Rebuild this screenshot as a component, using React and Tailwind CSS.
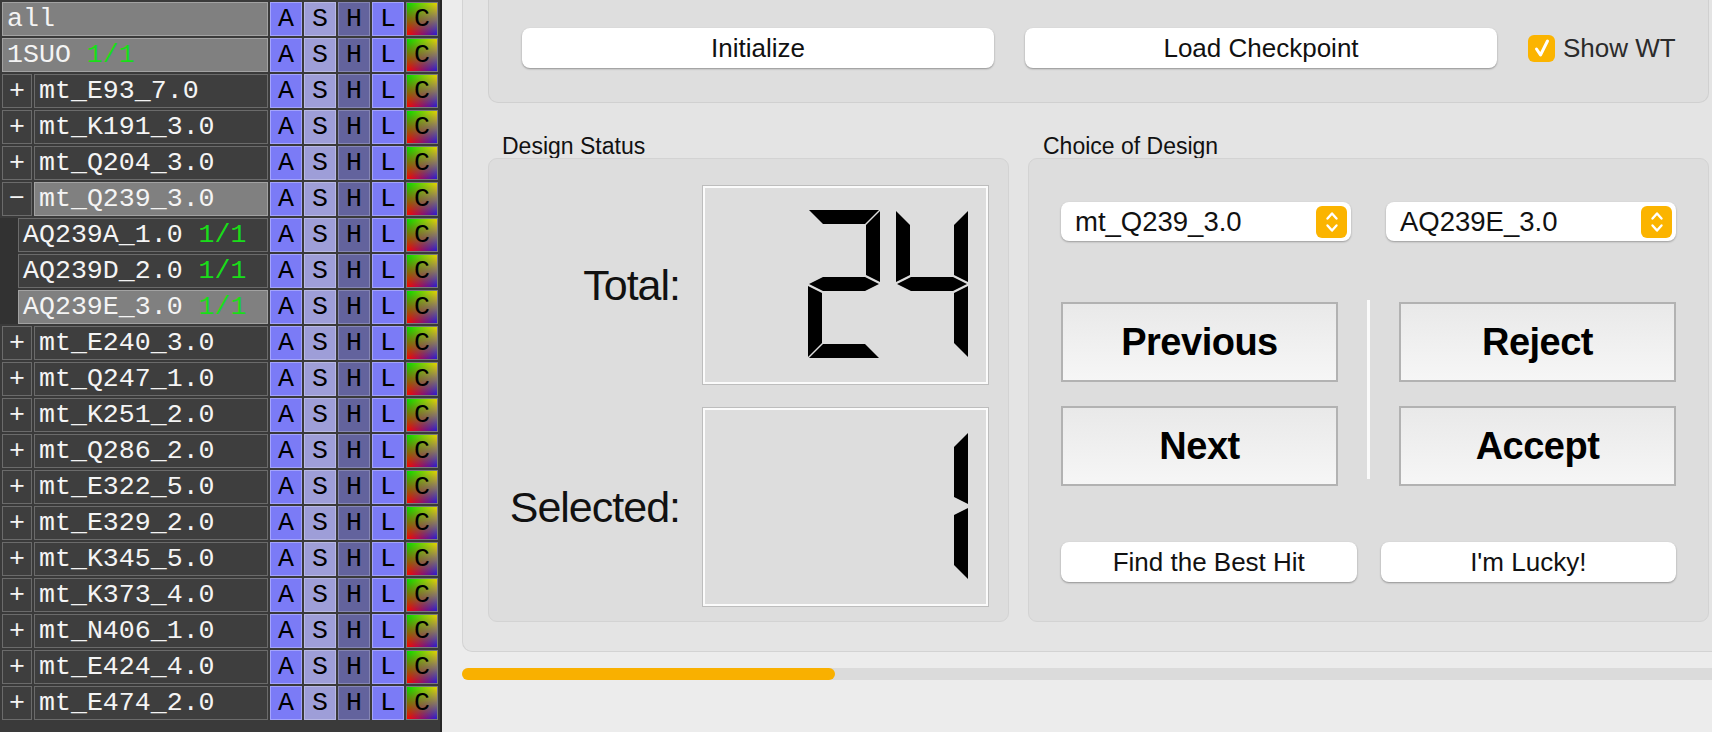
import React from 'react';

const MONO = "font-['Liberation_Mono',monospace]";

const ROWS = [
  { kind: 'top', name: 'all', hl: true },
  { kind: 'top', name: '1SUO', count: '1/1', hl: true },
  { kind: 'mut', sign: '+', name: 'mt_E93_7.0' },
  { kind: 'mut', sign: '+', name: 'mt_K191_3.0' },
  { kind: 'mut', sign: '+', name: 'mt_Q204_3.0' },
  { kind: 'mut', sign: '−', name: 'mt_Q239_3.0', hl: true },
  {
    kind: 'group',
    children: [
      { name: 'AQ239A_1.0', count: '1/1' },
      { name: 'AQ239D_2.0', count: '1/1' },
      { name: 'AQ239E_3.0', count: '1/1', hl: true },
    ],
  },
  { kind: 'mut', sign: '+', name: 'mt_E240_3.0' },
  { kind: 'mut', sign: '+', name: 'mt_Q247_1.0' },
  { kind: 'mut', sign: '+', name: 'mt_K251_2.0' },
  { kind: 'mut', sign: '+', name: 'mt_Q286_2.0' },
  { kind: 'mut', sign: '+', name: 'mt_E322_5.0' },
  { kind: 'mut', sign: '+', name: 'mt_E329_2.0' },
  { kind: 'mut', sign: '+', name: 'mt_K345_5.0' },
  { kind: 'mut', sign: '+', name: 'mt_K373_4.0' },
  { kind: 'mut', sign: '+', name: 'mt_N406_1.0' },
  { kind: 'mut', sign: '+', name: 'mt_E424_4.0' },
  { kind: 'mut', sign: '+', name: 'mt_E474_2.0' },
];

function NameCell({ name, count, hl, width }) {
  return (
    <div
      className={`flex h-full items-center border pl-[4px] text-[#f4f4f4] ${width} ${
        hl ? 'border-[#a2a2a2] bg-[#808080]' : 'border-[#6b6b6b] bg-[#3e3e3e]'
      }`}
    >
      <span className="whitespace-pre">{name}</span>
      {count && <span className="ml-[16px] text-[#19dd19]">{count}</span>}
    </div>
  );
}

function Tags() {
  const base = 'flex h-full w-[32px] items-center justify-center border text-black';
  return (
    <>
      <div className={`${base} border-[#a4a4fb] bg-[#7b7bf6]`}>A</div>
      <div className={`${base} border-[#b9b9e4] bg-[#9e9ed8]`}>S</div>
      <div className={`${base} border-[#8585b3] bg-[#63639d]`}>H</div>
      <div className={`${base} border-[#a4a4fb] bg-[#7b7bf6]`}>L</div>
      <div className={`${base} relative overflow-hidden border-[#7a7a7a] bg-[linear-gradient(to_right,#00dc00,#e6d400)]`}>
        <div className="absolute inset-0 bg-[linear-gradient(to_right,#ff0000,#2a18d2)] [mask-image:linear-gradient(to_bottom,transparent,black)] [-webkit-mask-image:linear-gradient(to_bottom,transparent,black)]" />
        <span className="relative">C</span>
      </div>
    </>
  );
}

function Tree() {
  return (
    <div className={`flex w-[440px] flex-col gap-[2px] bg-[#3a3a3a] pt-[2px] text-[26.6px] leading-none ${MONO}`}>
      {ROWS.map((row, i) => {
        if (row.kind === 'group') {
          return (
            <div key={i} className="flex">
              <div className="w-[18px] bg-[#323232]" />
              <div className="flex flex-col gap-[2px]">
                {row.children.map((c) => (
                  <div key={c.name} className="flex h-[34px] gap-[2px]">
                    <NameCell name={c.name} count={c.count} hl={c.hl} width="w-[250px]" />
                    <Tags />
                  </div>
                ))}
              </div>
            </div>
          );
        }
        return (
          <div key={i} className="ml-[2px] flex h-[34px] gap-[2px]">
            {row.kind === 'mut' && (
              <div className="flex h-full w-[30px] items-center justify-center border border-[#6b6b6b] bg-[#3e3e3e] text-[#f4f4f4]">
                {row.sign}
              </div>
            )}
            <NameCell
              name={row.name}
              count={row.count}
              hl={row.hl}
              width={row.kind === 'mut' ? 'w-[234px]' : 'w-[266px]'}
            />
            <Tags />
          </div>
        );
      })}
    </div>
  );
}

const SEG = {
  a: '1,0 71,0 57,14 15,14',
  b: '72,1 72,72 58,65 58,15',
  c: '72,76 72,147 58,133 58,83',
  d: '1,148 71,148 57,134 15,134',
  e: '0,76 0,147 14,133 14,83',
  f: '0,1 0,72 14,65 14,15',
  g: '1,74 15,67 57,67 71,74 57,81 15,81',
};
const DIGITS = { 1: 'bc', 2: 'abged', 4: 'fgbc' };

function Lcd({ value }) {
  const chars = String(value).split('');
  const start = 3 - chars.length;
  return (
    <div className="h-[200px] w-[287px] border border-[#bdbdbd] shadow-[inset_0_0_0_2px_#fbfbfb]">
      <svg width="285" height="198" viewBox="0 0 285 198">
        {chars.map((ch, i) => (
          <g key={i} transform={`translate(${17 + (start + i) * 88} 24)`} fill="#000">
            {DIGITS[ch].split('').map((s) => (
              <polygon key={s} points={SEG[s]} />
            ))}
          </g>
        ))}
      </svg>
    </div>
  );
}

function Chevrons() {
  return (
    <span className="flex h-[32px] w-[31px] items-center justify-center rounded-[6px] bg-[#fbb400]">
      <svg width="14" height="24" viewBox="0 0 14 24" fill="none" stroke="#fff" strokeWidth="2.4" strokeLinecap="round" strokeLinejoin="round">
        <path d="M2.5 8.5 L7 3.5 L11.5 8.5" />
        <path d="M2.5 15.5 L7 20.5 L11.5 15.5" />
      </svg>
    </span>
  );
}

const PILL = 'flex h-[40px] items-center justify-center rounded-[8px] bg-white text-[26px] shadow-[0_1px_2px_rgba(0,0,0,0.35)]';
const BIG = 'flex h-[80px] items-center justify-center border-2 border-[#b2b2b2] bg-linear-to-b from-[#e9e9e9] to-[#f6f6f6] text-[38px] font-bold tracking-[-0.5px] text-black';

function Main() {
  return (
    <div className="flex-1 bg-[#ececec] pl-[20px] font-['Liberation_Sans',Arial,sans-serif] text-[#111]">
      <div className="h-[652px] rounded-bl-[10px] border-b border-l border-[#d3d3d3] bg-[#e4e4e4] pl-[25px] pr-[3px]">
        {/* top controls */}
        <div className="flex h-[103px] items-start gap-[31px] rounded-b-[10px] border border-t-0 border-[#d0d0d0] bg-[#dedede] pl-[33px] pt-[28px]">
          <button className={`${PILL} w-[472px]`}>Initialize</button>
          <button className={`${PILL} w-[472px]`}>Load Checkpoint</button>
          <label className="flex h-[40px] items-center gap-[8px] text-[26px] text-[#2b2b2b]">
            <span className="flex h-[27px] w-[27px] items-center justify-center rounded-[6px] bg-[#fbb400]">
              <svg width="18" height="20" viewBox="0 0 18 20" fill="none" stroke="#fff" strokeWidth="3" strokeLinecap="round" strokeLinejoin="round">
                <path d="M3.5 11 L7.5 17 L14.5 3" />
              </svg>
            </span>
            Show WT
          </label>
        </div>

        <div className="mt-[31px] flex gap-[19px]">
          <div className="flex w-[521px] flex-col">
            <div className="h-[24px] pl-[14px] text-[23px] leading-[24px]">Design Status</div>
            <div className="flex h-[464px] flex-col items-end gap-[22px] rounded-[9px] border border-[#d3d3d3] bg-[#dddddd] pr-[19px] pt-[26px]">
              <div className="flex items-center gap-[22px]">
                <span className="text-[43px] leading-none tracking-[-1px]">Total:</span>
                <Lcd value="24" />
              </div>
              <div className="flex items-center gap-[22px]">
                <span className="text-[43px] leading-none tracking-[-1px]">Selected:</span>
                <Lcd value="1" />
              </div>
            </div>
          </div>

          <div className="flex flex-1 flex-col">
            <div className="h-[24px] pl-[15px] text-[23px] leading-[24px]">Choice of Design</div>
            <div className="h-[464px] rounded-[9px] border border-[#d3d3d3] bg-[#dddddd] px-[32px] pt-[43px]">
              <div className="flex gap-[35px]">
                {['mt_Q239_3.0', 'AQ239E_3.0'].map((v) => (
                  <div key={v} className="flex h-[39px] flex-1 items-center justify-between rounded-[8px] bg-white pl-[14px] pr-[4px] text-[27.5px] shadow-[0_1px_2px_rgba(0,0,0,0.3)]">
                    <span>{v}</span>
                    <Chevrons />
                  </div>
                ))}
              </div>

              <div className="mt-[61px] flex justify-between">
                <div className="flex w-[277px] flex-col gap-[24px]">
                  <button className={BIG}>Previous</button>
                  <button className={BIG}>Next</button>
                </div>
                <div className="mt-[-2px] h-[179px] w-[3px] bg-[#fafafa]" />
                <div className="flex w-[277px] flex-col gap-[24px]">
                  <button className={BIG}>Reject</button>
                  <button className={BIG}>Accept</button>
                </div>
              </div>

              <div className="mt-[56px] flex gap-[24px]">
                <button className={`${PILL} flex-1`}>Find the Best Hit</button>
                <button className={`${PILL} flex-1`}>I'm Lucky!</button>
              </div>
            </div>
          </div>
        </div>
      </div>

      {/* progress */}
      <div className="mt-[16px] h-[12px] rounded-l-full bg-[#dbdbdb]">
        <div className="h-full w-[373px] rounded-full bg-[#f9b000]" />
      </div>
    </div>
  );
}

export default function App() {
  return (
    <div className="flex h-[732px] w-[1712px] overflow-hidden">
      <Tree />
      <div className="w-[2px] bg-[#262626]" />
      <Main />
    </div>
  );
}
